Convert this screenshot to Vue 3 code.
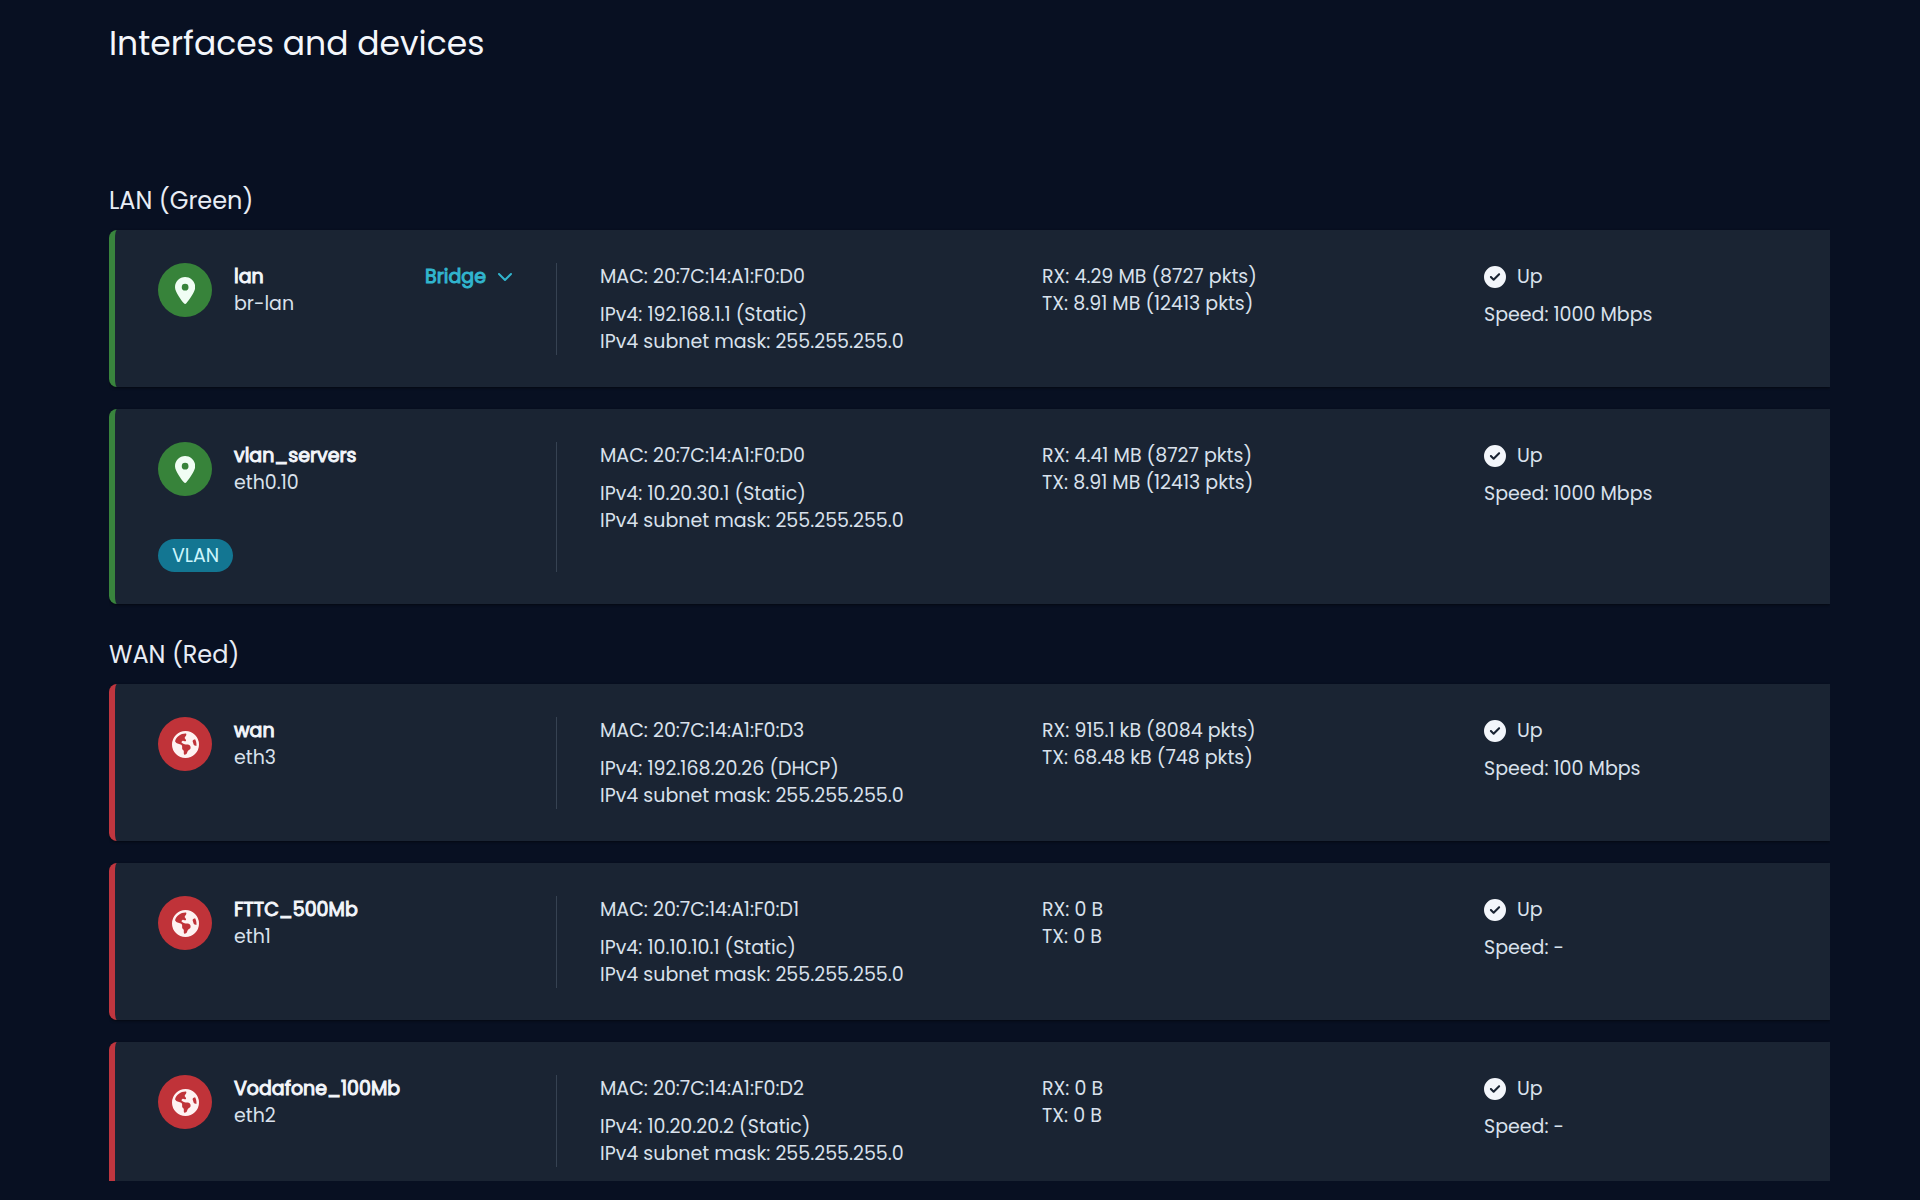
<script setup>
import { ref } from "vue";

const zones = ref([
  {
    name: "lan",
    title: "LAN (Green)",
    interfaces: [
      {
        name: "lan",
        device: "br-lan",
        bridge: true,
        mac: "20:7C:14:A1:F0:D0",
        ipv4: "192.168.1.1 (Static)",
        netmask: "255.255.255.0",
        rx: "4.29 MB (8727 pkts)",
        tx: "8.91 MB (12413 pkts)",
        speed: "1000 Mbps",
      },
      {
        name: "vlan_servers",
        device: "eth0.10",
        vlan: true,
        mac: "20:7C:14:A1:F0:D0",
        ipv4: "10.20.30.1 (Static)",
        netmask: "255.255.255.0",
        rx: "4.41 MB (8727 pkts)",
        tx: "8.91 MB (12413 pkts)",
        speed: "1000 Mbps",
      },
    ],
  },
  {
    name: "wan",
    title: "WAN (Red)",
    interfaces: [
      {
        name: "wan",
        device: "eth3",
        mac: "20:7C:14:A1:F0:D3",
        ipv4: "192.168.20.26 (DHCP)",
        netmask: "255.255.255.0",
        rx: "915.1 kB (8084 pkts)",
        tx: "68.48 kB (748 pkts)",
        speed: "100 Mbps",
      },
      {
        name: "FTTC_500Mb",
        device: "eth1",
        mac: "20:7C:14:A1:F0:D1",
        ipv4: "10.10.10.1 (Static)",
        netmask: "255.255.255.0",
        rx: "0 B",
        tx: "0 B",
        speed: "-",
      },
      {
        name: "Vodafone_100Mb",
        device: "eth2",
        mac: "20:7C:14:A1:F0:D2",
        ipv4: "10.20.20.2 (Static)",
        netmask: "255.255.255.0",
        rx: "0 B",
        tx: "0 B",
        speed: "-",
      },
    ],
  },
]);
</script>

<template>
  <main class="page">
    <h1 class="page-title">Interfaces and devices</h1>
    <div class="zones">
      <section
        v-for="zone in zones"
        :key="zone.name"
        :class="['zone', `zone-${zone.name}`]"
      >
        <h2 class="zone-title">{{ zone.title }}</h2>
        <div class="cards">
          <article
            v-for="iface in zone.interfaces"
            :key="iface.name"
            class="card"
          >
            <div class="identity">
              <div class="identity-row">
                <span class="zone-icon">
                  <svg
                    v-if="zone.name === 'lan'"
                    viewBox="0 0 384 512"
                    aria-hidden="true"
                  >
                    <path
                      d="M215.7 499.2C267 435 384 279.4 384 192C384 86 298 0 192 0S0 86 0 192c0 87.4 117 243 168.3 307.2c12.3 15.3 35.1 15.3 47.4 0zM192 128a64 64 0 1 1 0 128 64 64 0 1 1 0-128z"
                    />
                  </svg>
                  <svg v-else viewBox="0 0 512 512" aria-hidden="true">
                    <path
                      d="M57.7 193l9.4 16.4c8.3 14.5 21.9 25.2 38 29.8L163 255.7c17.2 4.9 29 20.6 29 38.5v39.9c0 11 6.2 21 16 25.9s16 14.9 16 25.9v39c0 15.6 14.9 26.9 29.9 22.6c16.1-4.6 28.6-17.5 32.7-33.8l2.8-11.2c4.2-16.9 15.2-31.4 30.3-40l8.1-4.6c15-8.5 24.2-24.5 24.2-41.7v-8.3c0-12.7-5.1-24.9-14.1-33.9l-3.9-3.9c-9-9-21.2-14.1-33.9-14.1H257c-11.1 0-22.1-2.9-31.8-8.4l-34.5-19.7c-4.3-2.5-7.6-6.5-9.2-11.2c-3.2-9.6 1.1-20 10.2-24.5l5.9-3c6.6-3.3 14.3-3.9 21.3-1.5l23.2 7.7c8.2 2.7 17.2-.4 21.9-7.5c4.7-7 4.2-16.3-1.2-22.8l-13.6-16.3c-10-12-9.9-29.5 .3-41.3l15.7-18.3c8.8-10.3 10.2-25 3.5-36.7l-2.4-4.2c-3.5-.2-6.9-.3-10.4-.3C163.1 48 84.4 108.9 57.7 193zM464 256c0-36.8-9.6-71.4-26.4-101.5L412 164.8c-15.7 6.3-23.8 23.8-18.5 39.8l16.9 50.7c3.5 10.4 12 18.3 22.6 20.9l29.1 7.3c1.2-9 1.8-18.2 1.8-27.5zM0 256a256 256 0 1 1 512 0A256 256 0 1 1 0 256z"
                    />
                  </svg>
                </span>
                <div class="names">
                  <strong class="name">{{ iface.name }}</strong>
                  <span>{{ iface.device }}</span>
                </div>
                <button v-if="iface.bridge" type="button" class="bridge">
                  Bridge
                  <svg viewBox="0 0 16 10" aria-hidden="true">
                    <path d="M2 2l6 6 6-6" />
                  </svg>
                </button>
              </div>
              <span v-if="iface.vlan" class="badge">VLAN</span>
            </div>

            <div class="info">
              <div>MAC: {{ iface.mac }}</div>
              <div>
                <div>IPv4: {{ iface.ipv4 }}</div>
                <div>IPv4 subnet mask: {{ iface.netmask }}</div>
              </div>
            </div>

            <div>
              <div>RX: {{ iface.rx }}</div>
              <div>TX: {{ iface.tx }}</div>
            </div>

            <div class="info">
              <div class="status">
                <svg viewBox="0 0 512 512" aria-hidden="true">
                  <path
                    d="M256 512A256 256 0 1 0 256 0a256 256 0 1 0 0 512zM369 209L241 337c-9.4 9.4-24.6 9.4-33.9 0l-64-64c-9.4-9.4-9.4-24.6 0-33.9s24.6-9.4 33.9 0l47 47L335 175c9.4-9.4 24.6-9.4 33.9 0s9.4 24.6 0 33.9z"
                  />
                </svg>
                Up
              </div>
              <div>Speed: {{ iface.speed }}</div>
            </div>
          </article>
        </div>
      </section>
    </div>
  </main>
</template>

<style>
body {
  margin: 0;
  background: #081022;
}
</style>

<style scoped>
/* Layout */
.page {
  box-sizing: border-box;
  display: flex;
  flex-direction: column;
  height: 100vh;
  padding: 22px 90px 19px 109px;
  font-family: Poppins, Inter, "Liberation Sans", sans-serif;
  font-size: 19px;
  line-height: 27px;
  color: #d9e1ec;
}

.page-title {
  margin: 0 0 116px;
  font-size: 33px;
  font-weight: 400;
  line-height: 44px;
  color: #f3f6fb;
}

.zones {
  display: flex;
  flex: 1;
  flex-direction: column;
  gap: 32px;
  min-height: 0;
  overflow: hidden;
}

.zone {
  flex-shrink: 0;
}

.zone-title {
  margin: 0 0 10px;
  font-size: 24px;
  font-weight: 400;
  line-height: 38px;
  color: #e8edf5;
}

.cards {
  display: flex;
  flex-direction: column;
  gap: 22px;
}

.card {
  display: grid;
  grid-template-columns: repeat(3, 1fr) 303px;
  padding: 33px 43px 32px;
  border-left: 6px solid;
  border-radius: 8px 0 0 8px;
  background: #1a2433;
  box-shadow: 0 1px 3px rgba(0, 0, 0, 0.5);
}

/* Zone colors */
.zone-lan .card {
  border-color: #39843d;
}

.zone-wan .card {
  border-color: #bf363f;
}

.zone-lan .zone-icon {
  background: #37833a;
  fill: #f0fdf4;
}

.zone-wan .zone-icon {
  background: #c03339;
  fill: #fef2f2;
}

/* Name and device */
.identity {
  display: flex;
  flex-direction: column;
  gap: 43px;
  margin-right: 43px;
  border-right: 1px solid #364252;
}

.identity-row {
  display: flex;
  align-items: flex-start;
  gap: 22px;
}

.zone-icon {
  display: flex;
  flex-shrink: 0;
  align-items: center;
  justify-content: center;
  width: 54px;
  height: 54px;
  border-radius: 50%;
}

.zone-icon svg {
  height: 27px;
}

.names {
  display: flex;
  flex: 1;
  flex-direction: column;
}

/* Regular weight with a stroke, keeps the narrow letter widths */
.name,
.bridge {
  font-weight: 400;
  -webkit-text-stroke: 1px currentColor;
}

.name {
  color: #f3f6fb;
}

.bridge {
  display: flex;
  align-items: center;
  gap: 11px;
  margin-right: 43px;
  padding: 0;
  border: 0;
  background: none;
  font-family: inherit;
  font-size: inherit;
  line-height: inherit;
  color: #31b5ce;
  cursor: pointer;
}

.bridge svg {
  width: 16px;
  height: 10px;
  fill: none;
  stroke: currentColor;
  stroke-width: 2;
  stroke-linecap: round;
  stroke-linejoin: round;
}

.badge {
  align-self: flex-start;
  padding: 3px 14px;
  border-radius: 17px;
  background: #137692;
  color: #cbf5fc;
}

/* Details */
.info {
  display: flex;
  flex-direction: column;
  gap: 11px;
}

.status {
  display: flex;
  align-items: center;
  gap: 11px;
}

.status svg {
  width: 22px;
  height: 22px;
  fill: #f3f6fb;
}
</style>
